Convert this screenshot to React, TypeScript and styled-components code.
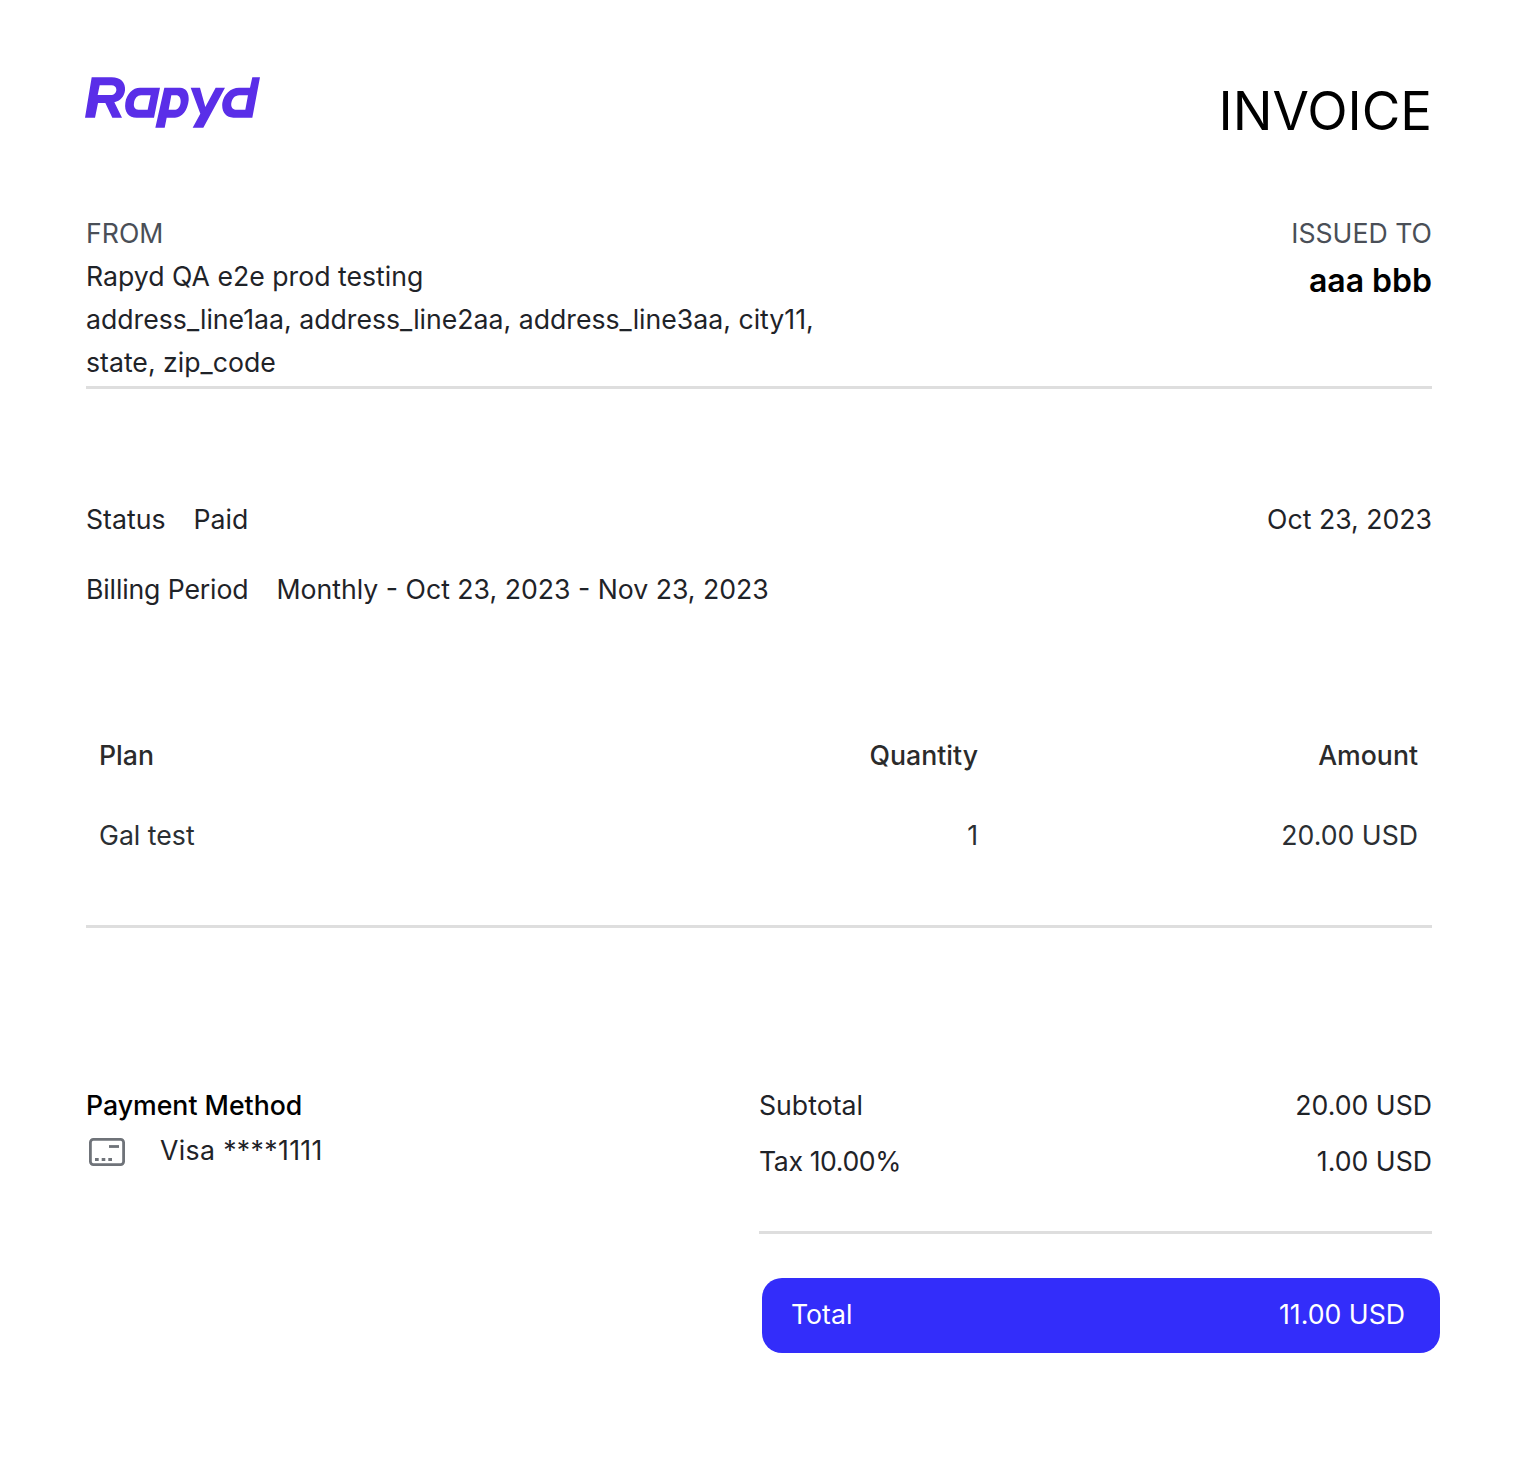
import React from 'react';
import styled, { createGlobalStyle } from 'styled-components';

const GlobalStyle = createGlobalStyle`
  html, body {
    margin: 0;
    background: #fff;
  }
  body {
    font-family: Inter, "Liberation Sans", sans-serif;
    font-size: 26.67px;
    color: #1f2328;
  }
`;

const Logo = () => (
  <LogoSvg viewBox="45 50 525 152" aria-label="Rapyd">
    <path
      fillRule="evenodd"
      d="M65 51H125C152 51 167 67 165 90C163 109 151 122 133 126L156 172H127L106 128H84L75 172H45ZM89 75L83 104H122C132 104 139 97 139 88C139 80 133 75 124 75Z"
    />
    <path
      fillRule="evenodd"
      d="M210 82H270L252 172H200C176 172 162 155 166 127C170 101 188 82 210 82ZM213 105C202 105 194 114 192 128C190 140 195 148 205 148H233L242 105Z"
    />
    <path
      fillRule="evenodd"
      d="M283 82H330C348 82 358 98 356 120C353 150 336 172 315 172H290L284 202H256ZM304 105L296 148H316C325 148 331 137 332 125C333 113 327 105 318 105Z"
    />
    <path d="M362 82H390L406 140L437 82H465L400 202H368L391 160Z" />
    <path
      fillRule="evenodd"
      d="M547 51H570L547 172H490C468 172 454 155 457 128C461 102 482 82 507 82H540ZM508 105C494 105 486 116 484 128C482 141 489 148 500 148H526L534 105Z"
    />
  </LogoSvg>
);

const CardIcon = () => (
  <CardSvg viewBox="0 0 36 28" fill="none" stroke="#6f7379" strokeWidth="2.8">
    <rect x="1.4" y="1.4" width="33.2" height="25.2" rx="3" />
    <path d="M20 8.5H30" />
    <path d="M6 21.5H9.7M12.7 21.5H16.3M19.3 21.5H23" />
  </CardSvg>
);

export default function App() {
  return (
    <>
      <GlobalStyle />
      <Page>
        <Header>
          <Logo />
          <Title>INVOICE</Title>
        </Header>

        <Parties>
          <From>
            <Label>FROM</Label>
            <AddressLine>Rapyd QA e2e prod testing</AddressLine>
            <AddressLine>address_line1aa, address_line2aa, address_line3aa, city11,</AddressLine>
            <AddressLine>state, zip_code</AddressLine>
          </From>
          <IssuedTo>
            <Label>ISSUED TO</Label>
            <Customer>aaa bbb</Customer>
          </IssuedTo>
        </Parties>

        <Meta>
          <MetaRow>
            <MetaPair>
              <span>Status</span>
              <span>Paid</span>
            </MetaPair>
            <span>Oct 23, 2023</span>
          </MetaRow>
          <MetaRow>
            <MetaPair>
              <MetaLabel>Billing Period</MetaLabel>
              <span>Monthly - Oct 23, 2023 - Nov 23, 2023</span>
            </MetaPair>
          </MetaRow>
        </Meta>

        <Items>
          <HeadCell>Plan</HeadCell>
          <HeadCell $right>Quantity</HeadCell>
          <HeadCell $right>Amount</HeadCell>
          <BodyCell>Gal test</BodyCell>
          <BodyCell $right>1</BodyCell>
          <BodyCell $right>20.00 USD</BodyCell>
        </Items>

        <Summary>
          <Payment>
            <PaymentTitle>Payment Method</PaymentTitle>
            <CardRow>
              <CardIcon />
              <CardNumber>Visa ****1111</CardNumber>
            </CardRow>
          </Payment>
          <Totals>
            <TotalsRow>
              <span>Subtotal</span>
              <span>20.00 USD</span>
            </TotalsRow>
            <TotalsRow>
              <TaxLabel>Tax 10.00%</TaxLabel>
              <span>1.00 USD</span>
            </TotalsRow>
            <TotalsRule />
            <TotalBar>
              <span>Total</span>
              <span>11.00 USD</span>
            </TotalBar>
          </Totals>
        </Summary>
      </Page>
    </>
  );
}

const Page = styled.div`
  box-sizing: border-box;
  width: 1522px;
  height: 1480px;
  padding: 77px 90px 0 86px;
`;

const Header = styled.header`
  display: flex;
  justify-content: space-between;
  align-items: flex-start;
  height: 135px;
`;

const LogoSvg = styled.svg`
  width: 175px;
  height: 50.67px;
  margin-left: -1px;
  fill: #5a2ee8;
`;

const Title = styled.h1`
  margin: 0;
  padding-top: 5px;
  font-size: 52.8px;
  line-height: 58px;
  font-weight: 400;
  color: #000;
`;

const Parties = styled.section`
  display: flex;
  justify-content: space-between;
  height: 174px;
  border-bottom: 3px solid #dedede;
`;

const From = styled.div`
  display: flex;
  flex-direction: column;
`;

const IssuedTo = styled.div`
  display: flex;
  flex-direction: column;
  align-items: flex-end;
`;

const Label = styled.div`
  line-height: 43px;
  color: #4a4f57;
`;

const AddressLine = styled.div`
  line-height: 43px;
`;

const Customer = styled.div`
  font-size: 32px;
  line-height: 52px;
  font-weight: 600;
  color: #000;
`;

const Meta = styled.section`
  display: flex;
  flex-direction: column;
  gap: 30px;
  padding-top: 110px;
`;

const MetaRow = styled.div`
  display: flex;
  justify-content: space-between;
  line-height: 40px;
`;

const MetaPair = styled.div`
  display: flex;
  gap: 28px;
`;

const MetaLabel = styled.span`
  letter-spacing: -0.15px;
`;

const Items = styled.section`
  display: grid;
  grid-template-columns: 1fr 200px 440px;
  grid-auto-rows: 80px;
  align-items: center;
  margin-top: 106px;
  padding: 0 14px 50px 13px;
  border-bottom: 3px solid #dedede;
`;

const HeadCell = styled.div<{ $right?: boolean }>`
  font-weight: 500;
  color: #2b2b2b;
  text-align: ${(p) => (p.$right ? 'right' : 'left')};
`;

const BodyCell = styled.div<{ $right?: boolean }>`
  color: #2b2f33;
  text-align: ${(p) => (p.$right ? 'right' : 'left')};
`;

const Summary = styled.section`
  display: flex;
  justify-content: space-between;
  padding-top: 157px;
`;

const Payment = styled.div`
  display: flex;
  flex-direction: column;
`;

const PaymentTitle = styled.div`
  line-height: 40px;
  font-weight: 500;
  color: #000;
`;

const CardRow = styled.div`
  display: flex;
  align-items: center;
  gap: 35px;
  line-height: 50px;
  padding-left: 3px;
`;

const CardNumber = styled.span`
  letter-spacing: 0.35px;
`;

const CardSvg = styled.svg`
  width: 36px;
  height: 28px;
  margin-top: 4px;
`;

const Totals = styled.div`
  width: 673px;
  display: flex;
  flex-direction: column;
`;

const TotalsRow = styled.div`
  display: flex;
  justify-content: space-between;
  line-height: 40px;
  margin-bottom: 16px;
`;

const TaxLabel = styled.span`
  letter-spacing: -0.4px;
`;

const TotalsRule = styled.div`
  height: 3px;
  margin-top: 34px;
  background: #dedede;
`;

const TotalBar = styled.div`
  display: flex;
  justify-content: space-between;
  align-items: center;
  box-sizing: border-box;
  width: 678px;
  height: 75px;
  margin: 44px 0 0 3px;
  padding: 0 35px 4px 29px;
  border-radius: 20px;
  background: #332dfa;
  color: #fff;
`;
